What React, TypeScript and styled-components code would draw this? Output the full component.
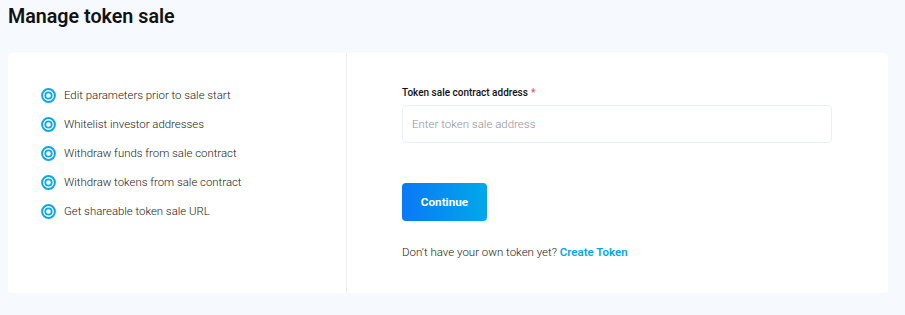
import React from "react";
import styled, { createGlobalStyle } from "styled-components";

const Global = createGlobalStyle`
  html, body { margin: 0; padding: 0; background: #f6f9fe; }
  body { font-family: Roboto, "Liberation Sans", Arial, sans-serif; color: #1d1d1d; }
  * { box-sizing: border-box; }
`;

const Page = styled.div`
  padding: 5px 17px 0 8px;
  width: 905px;
`;

const Title = styled.h1`
  margin: 0;
  font-size: 19.7px;
  font-weight: 600;
  line-height: 24px;
  color: #111;
`;

const Card = styled.div`
  margin-top: 24px;
  height: 240px;
  background: #fff;
  border-radius: 4px;
  display: grid;
  grid-template-columns: 339px 1fr;
`;

const Features = styled.ul`
  list-style: none;
  margin: 0;
  padding: 33px 0 0 33px;
  border-right: 1px solid #eceef4;
  display: flex;
  flex-direction: column;
  gap: 11px;
`;

const Feature = styled.li`
  display: flex;
  align-items: center;
  gap: 8px;
  height: 18px;
  font-size: 11.4px;
  font-weight: 300;
  color: #222;
`;

const Form = styled.div`
  padding: 33px 56px 0 55px;
  display: flex;
  flex-direction: column;
`;

const Label = styled.label`
  font-size: 10px;
  font-weight: 500;
  color: #111;
  line-height: 14px;
`;

const Req = styled.span`
  color: #f0506e;
  margin-left: 3px;
  font-size: 10px;
  vertical-align: top;
`;

const Input = styled.input`
  margin-top: 5px;
  height: 38px;
  width: 100%;
  border: 1px solid #e9eefb;
  border-radius: 4px;
  padding: 0 9px;
  font-family: inherit;
  font-size: 11.5px;
  font-weight: 300;
  color: #333;
  outline: none;
  &::placeholder { color: #8f9198; }
`;

const Button = styled.button`
  margin-top: 40px;
  width: 85px;
  height: 38px;
  border: none;
  border-radius: 4px;
  background: linear-gradient(90deg, #0a78f6 0%, #02a8ea 100%);
  color: #fff;
  font-family: inherit;
  font-size: 11.7px;
  font-weight: 700;
  cursor: pointer;
`;

const Hint = styled.p`
  margin: 24px 0 0;
  font-size: 11.5px;
  font-weight: 300;
  color: #222;
`;

const Link = styled.a`
  color: #06a6e8;
  font-weight: 600;
  text-decoration: none;
`;

const RingIcon = () => (
  <svg width="15" height="15" viewBox="0 0 15 15">
    <circle cx="7.5" cy="7.5" r="6.4" fill="none" stroke="#0aa8ea" strokeWidth="2" />
    <circle cx="7.5" cy="7.5" r="3.2" fill="none" stroke="#0aa8ea" strokeWidth="1.8" />
  </svg>
);

const items = [
  "Edit parameters prior to sale start",
  "Whitelist investor addresses",
  "Withdraw funds from sale contract",
  "Withdraw tokens from sale contract",
  "Get shareable token sale URL",
];

export default function App() {
  return (
    <>
      <Global />
      <Page>
        <Title>Manage token sale</Title>
        <Card>
          <Features>
            {items.map((t) => (
              <Feature key={t}>
                <RingIcon />
                {t}
              </Feature>
            ))}
          </Features>
          <Form>
            <Label>
              Token sale contract address<Req>*</Req>
            </Label>
            <Input placeholder="Enter token sale address" />
            <div>
              <Button>Continue</Button>
            </div>
            <Hint>
              Don’t have your own token yet? <Link href="#">Create Token</Link>
            </Hint>
          </Form>
        </Card>
      </Page>
    </>
  );
}
